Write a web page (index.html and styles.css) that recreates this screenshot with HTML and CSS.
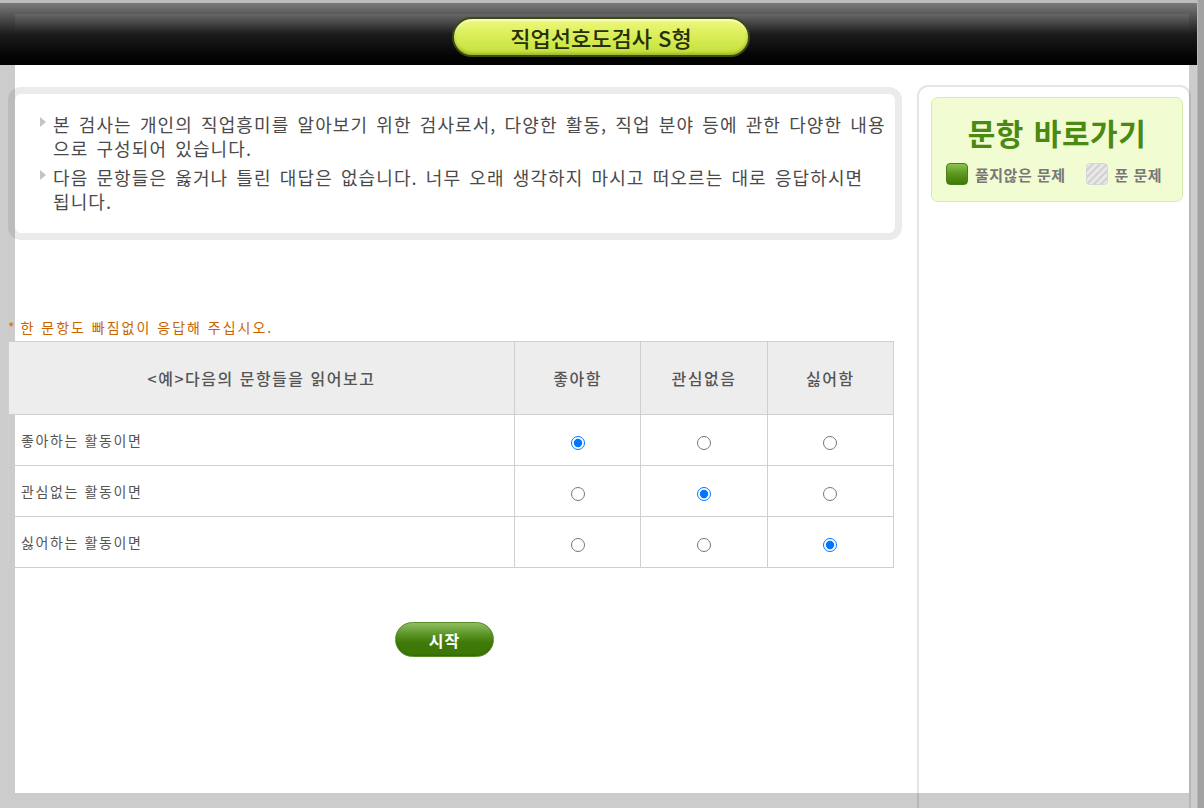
FILE: index.html
```html
<!DOCTYPE html>
<html lang="ko">
<head>
<meta charset="utf-8">
<title>직업선호도검사 S형</title>
<link rel="stylesheet" href="styles.css">
</head>
<body>
<div class="viewport">
  <header class="topbar">
    <div class="topbar-inner">
      <div class="title-pill">직업선호도검사 S형</div>
    </div>
  </header>
  <div class="frame">
    <main class="main">
      <div class="infobox">
        <ul class="info-list">
          <li>본 검사는 개인의 직업흥미를 알아보기 위한 검사로서, 다양한 활동, 직업 분야 등에 관한 다양한 내용으로 구성되어 있습니다.</li>
          <li>다음 문항들은 옳거나 틀린 대답은 없습니다. 너무 오래 생각하지 마시고 떠오르는 대로 응답하시면 됩니다.</li>
        </ul>
      </div>
      <p class="note"><span class="star">*</span> 한 문항도 빠짐없이 응답해 주십시오.</p>
      <table class="sample">
        <thead>
          <tr>
            <th class="q-col">&lt;예&gt;다음의 문항들을 읽어보고</th>
            <th>좋아함</th>
            <th>관심없음</th>
            <th>싫어함</th>
          </tr>
        </thead>
        <tbody>
          <tr>
            <td class="q">좋아하는 활동이면</td>
            <td><input type="radio" name="r1" checked></td>
            <td><input type="radio" name="r1"></td>
            <td><input type="radio" name="r1"></td>
          </tr>
          <tr>
            <td class="q">관심없는 활동이면</td>
            <td><input type="radio" name="r2"></td>
            <td><input type="radio" name="r2" checked></td>
            <td><input type="radio" name="r2"></td>
          </tr>
          <tr>
            <td class="q">싫어하는 활동이면</td>
            <td><input type="radio" name="r3"></td>
            <td><input type="radio" name="r3"></td>
            <td><input type="radio" name="r3" checked></td>
          </tr>
        </tbody>
      </table>
      <button class="start-btn" type="button">시작</button>
    </main>
    <aside class="sidebar">
      <div class="nav-box">
        <h2 class="nav-title">문항 바로가기</h2>
        <div class="legend">
          <span class="legend-item"><span class="sq sq-todo"></span>풀지않은 문제</span>
          <span class="legend-item"><span class="sq sq-done"></span>푼 문제</span>
        </div>
      </div>
    </aside>
  </div>
</div>
<div class="edge"></div>
</body>
</html>
```
FILE: styles.css
```css
html, body {
  margin: 0;
  padding: 0;
  height: 100%;
}
body {
  background: #cccccc;
  display: flex;
  overflow: hidden;
  font-family: "Noto Sans CJK KR", "Noto Sans", sans-serif;
  color: #444;
}
.viewport {
  flex: 1;
  display: flex;
  flex-direction: column;
  min-width: 0;
}
.edge {
  width: 7px;
  background: linear-gradient(90deg, #b8b8b8 0, #b8b8b8 1px, #a2a2a2 1px);
}
.topbar {
  height: 62px;
  border-top: 3px solid #bdbdbd;
  background: linear-gradient(#7a7a7a 0, #555 20%, #1c1c1c 50%, #050505 85%, #000 100%);
  position: relative;
}
.topbar-inner {
  margin: 11px 8px 0 15px;
  height: 48px;
  background: linear-gradient(rgba(255,255,255,0.08), rgba(255,255,255,0) 40%);
  display: flex;
  justify-content: center;
}
.title-pill {
  margin-top: 3px;
  margin-left: -2px;
  width: 294px;
  height: 36px;
  border: 2px solid #3c4a12;
  border-radius: 20px;
  background: linear-gradient(#f0f87e 0%, #dcef5c 40%, #c4e03a 100%);
  box-shadow: inset 0 -2px 3px rgba(80,110,0,0.35), inset 0 2px 2px rgba(255,255,255,0.6);
  display: flex;
  align-items: center;
  justify-content: center;
  font-size: 22px;
  font-weight: 500;
  color: #263008;
  letter-spacing: 0;
}
.frame {
  background: #fff;
  margin: 0 8px 15px 15px;
  height: 728px;
  display: flex;
  align-items: flex-start;
}
.main {
  margin-left: -7px;
  width: 894px;
  flex-shrink: 0;
  padding-top: 22px;
}
.infobox {
  border: 7px solid rgba(0,0,0,0.08);
  border-radius: 13px;
  height: 153px;
  box-sizing: border-box;
  padding: 18px 9px 0 25px;
}
.info-list {
  list-style: none;
  margin: 0;
  padding: 0;
}
.info-list li {
  position: relative;
  padding-left: 13px;
  font-size: 18px;
  line-height: 24px;
  letter-spacing: 1.1px;
  word-spacing: 2px;
  word-break: break-all;
  color: #4a4a4a;
  margin-bottom: 5px;
}
.info-list li::before {
  content: "";
  position: absolute;
  left: 0;
  top: 5px;
  border-left: 6px solid #c4c4c4;
  border-top: 5px solid transparent;
  border-bottom: 5px solid transparent;
}
.note {
  margin: 79px 0 6px 0;
  font-size: 14px;
  letter-spacing: 2px;
  color: #c86400;
  line-height: 16px;
}
.star {
  color: #d07000;
  margin-right: -2px;
}
.sample {
  width: 886px;
  border-collapse: collapse;
  table-layout: fixed;
}
.sample th, .sample td {
  border: 1px solid #cfcfcf;
  text-align: center;
}
.sample th {
  background: #ededed;
  height: 72px;
  font-size: 16px;
  font-weight: 500;
  color: #555;
  padding: 0;
  letter-spacing: 1.5px;
}
.sample th.q-col {
  width: 505px;
}
.sample td {
  height: 50px;
  padding: 0;
}
.sample td.q {
  text-align: left;
  padding-left: 12px;
  font-size: 14px;
  letter-spacing: 1.6px;
  color: #555;
}
.sample input[type="radio"] {
  margin: 0;
  width: 14px;
  height: 14px;
  vertical-align: middle;
}
.start-btn {
  display: block;
  margin: 54px 0 0 387px;
  width: 99px;
  height: 35px;
  border: 1px solid #5b8c2c;
  border-radius: 18px;
  background: linear-gradient(#8fbe63 0%, #5a9424 35%, #3f7a08 60%, #3d7806 100%);
  color: #fff;
  font-family: "Noto Sans CJK KR", sans-serif;
  font-size: 16px;
  font-weight: 700;
  letter-spacing: 1px;
  padding: 0;
  box-shadow: inset 0 -1px 2px rgba(0,0,0,0.15);
}
.sidebar {
  margin-left: 15px;
  margin-top: 20px;
  width: 274px;
  flex-shrink: 0;
  height: 723px;
  box-sizing: border-box;
  background: transparent;
  border: 2px solid rgba(0,0,0,0.1);
  border-bottom: 0;
  border-radius: 11px 11px 0 0;
  padding: 10px 6px 0 12px;
}
.nav-box {
  background: #f2fcd3;
  border: 1px solid #d6ecac;
  border-radius: 7px;
  height: 105px;
  box-sizing: border-box;
  padding-top: 12px;
}
.nav-title {
  margin: 0;
  text-align: center;
  font-size: 30px;
  line-height: 44px;
  font-weight: 700;
  color: #4a8a12;
  letter-spacing: 0.5px;
  word-spacing: 1px;
}
.legend {
  display: flex;
  align-items: center;
  padding-left: 14px;
  margin-top: 9px;
  gap: 20px;
}
.legend-item {
  display: flex;
  align-items: center;
  font-size: 15px;
  font-weight: 700;
  letter-spacing: 0.5px;
  color: #777;
}
.sq {
  width: 22px;
  height: 22px;
  border-radius: 4px;
  margin-right: 7px;
  box-sizing: border-box;
}
.sq-todo {
  background: linear-gradient(#8cc24f 0%, #5f9a20 45%, #3d7a06 100%);
  border: 1px solid #4b7d1a;
}
.sq-done {
  background: repeating-linear-gradient(135deg, #e8e8e8 0 3px, #d2d2d2 3px 5px);
  border: 1px solid #d6d6d6;
}
```
